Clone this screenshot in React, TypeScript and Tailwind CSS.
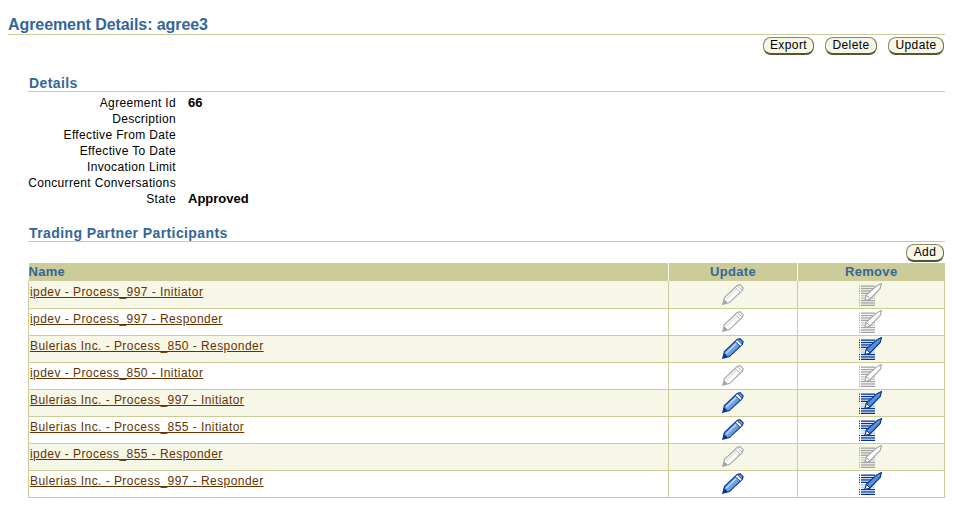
const sans = "font-['Liberation_Sans',Arial,sans-serif]";

const details = [
  { label: 'Agreement Id', value: '66' },
  { label: 'Description' },
  { label: 'Effective From Date' },
  { label: 'Effective To Date' },
  { label: 'Invocation Limit' },
  { label: 'Concurrent Conversations' },
  { label: 'State', value: 'Approved' },
];

const participants = [
  { name: 'ipdev - Process_997 - Initiator', on: false },
  { name: 'ipdev - Process_997 - Responder', on: false },
  { name: 'Bulerias Inc. - Process_850 - Responder', on: true },
  { name: 'ipdev - Process_850 - Initiator', on: false },
  { name: 'Bulerias Inc. - Process_997 - Initiator', on: true },
  { name: 'Bulerias Inc. - Process_855 - Initiator', on: true },
  { name: 'ipdev - Process_855 - Responder', on: false },
  { name: 'Bulerias Inc. - Process_997 - Responder', on: true },
];

function Btn({ label, width }: { label: string; width: string }) {
  return (
    <button className={`${width} h-[18px] rounded-[8px] border border-[#8a8a60] border-b-2 border-b-[#555530] border-r-[#6b6b40] bg-[#f7f7e7] text-[12px] leading-[15px] tracking-[0.4px] text-black`}>
      {label}
    </button>
  );
}

function Pencil({ on }: { on: boolean }) {
  const line = on ? '#003399' : '#a3a3a3';
  const body = on ? '#6c9fe0' : '#ffffff';
  return (
    <svg width="22" height="21" viewBox="0 0 22 21" className="block">
      <path d="M0.8 20.2 L2.4 13.6 L15.2 1.6 L18 0.7 L21.2 3.8 L20.2 6.4 L7.4 18.6 Z" fill={body} stroke={line} strokeWidth="1.1" />
      <path d="M15.2 1.6 L20.2 6.4 L18.2 8.3 L13.2 3.5 Z" fill="#ffffff" stroke={line} strokeWidth="0.9" />
      <path d="M4.2 15.2 L14.2 5.4" stroke={on ? '#b9d6f5' : '#e4e4e4'} strokeWidth="1.6" />
      <path d="M0.8 20.2 L2.5 15.6 L5.6 18.6 Z" fill={line} />
    </svg>
  );
}

function RemoveIcon({ on }: { on: boolean }) {
  const line = on ? '#003399' : '#a3a3a3';
  const soft = on ? '#a9cdf0' : '#c4c4c4';
  const body = on ? '#5a8fd0' : '#ffffff';
  const rows = [0, 1, 2, 3, 4, 5, 6, 7, 8];
  return (
    <svg width="23" height="23" viewBox="0 0 23 23" className="block">
      {rows.map((i) => {
        const y = 2.5 + i * 2.4;
        const color = i === 4 || i === 5 ? soft : line;
        return (
          <g key={i}>
            <rect x="0" y={y} width="1" height="1.3" fill={color} />
            <rect x="2" y={y} width="14" height="1.3" fill={color} />
          </g>
        );
      })}
      <path d="M6 17.5 L7.4 12 L18 2.6 L22.5 0.5 L21.2 5.4 L11 16 Z" fill={body} stroke={line} strokeWidth="1.1" />
      <path d="M6 17.5 L7.4 12.4 L11.2 16 Z" fill="#ffffff" stroke={line} strokeWidth="1" />
    </svg>
  );
}

export default function App() {
  return (
    <div className={`${sans} h-[506px] w-[953px] overflow-hidden bg-white pl-2 pr-2 pt-[15px] text-[12px] text-black`}>
      <h1 className="h-5 border-b border-[#cccc99] text-[16px] font-bold leading-[19px] tracking-[-0.08px] text-[#336699]">
        Agreement Details: agree3
      </h1>

      <div className="mt-[2px] flex justify-end gap-[11px] pr-px">
        <Btn label="Export" width="w-[51px]" />
        <Btn label="Delete" width="w-[52px]" />
        <Btn label="Update" width="w-[56px]" />
      </div>

      <div className="pl-5">
        <h2 className="mt-[19px] h-[18px] border-b border-[#cccc99] pl-px text-[14px] font-bold leading-[19px] tracking-[0.4px] text-[#336699]">
          Details
        </h2>
        <div className="mt-[3px]">
          {details.map((d) => (
            <div key={d.label} className="flex h-4 items-center leading-4">
              <div className="w-[148px] text-right tracking-[0.35px]">{d.label}</div>
              <div className="ml-3 text-[13px] font-bold">{d.value}</div>
            </div>
          ))}
        </div>

        <h2 className="mt-[17px] h-[18px] border-b border-[#cccc99] pl-px text-[14px] font-bold leading-[19px] tracking-[0.4px] text-[#336699]">
          Trading Partner Participants
        </h2>
        <div className="mt-[2px] flex justify-end pr-px">
          <Btn label="Add" width="w-[38px]" />
        </div>

        <table className="mt-px w-[917px] table-fixed border-collapse">
          <colgroup>
            <col className="w-[640px]" />
            <col className="w-[129px]" />
            <col />
          </colgroup>
          <thead>
            <tr className="h-[18px] bg-[#cccc99] text-[13px] font-bold tracking-[0.3px] text-[#336699]">
              <th className="p-0 text-left leading-[18px]">Name</th>
              <th className="border-l border-white p-0 leading-[18px] text-center">Update</th>
              <th className="border-l border-white p-0 leading-[18px] text-center">Remove</th>
            </tr>
          </thead>
          <tbody>
            {participants.map((p, i) => (
              <tr key={p.name} className={`h-[27px] ${i % 2 === 0 ? 'bg-[#f7f7e7]' : 'bg-white'}`}>
                <td className="border border-t-0 border-[#cccc99] px-px pb-[5px] align-middle">
                  <a href="#" className="tracking-[0.45px] text-[#663300] underline">
                    {p.name}
                  </a>
                </td>
                <td className="border border-t-0 border-[#cccc99] align-middle">
                  <div className="flex justify-center pr-px">
                    <Pencil on={p.on} />
                  </div>
                </td>
                <td className="border border-t-0 border-[#cccc99] align-middle">
                  <div className="flex justify-center pr-[2px]">
                    <RemoveIcon on={p.on} />
                  </div>
                </td>
              </tr>
            ))}
          </tbody>
        </table>
      </div>
    </div>
  );
}
